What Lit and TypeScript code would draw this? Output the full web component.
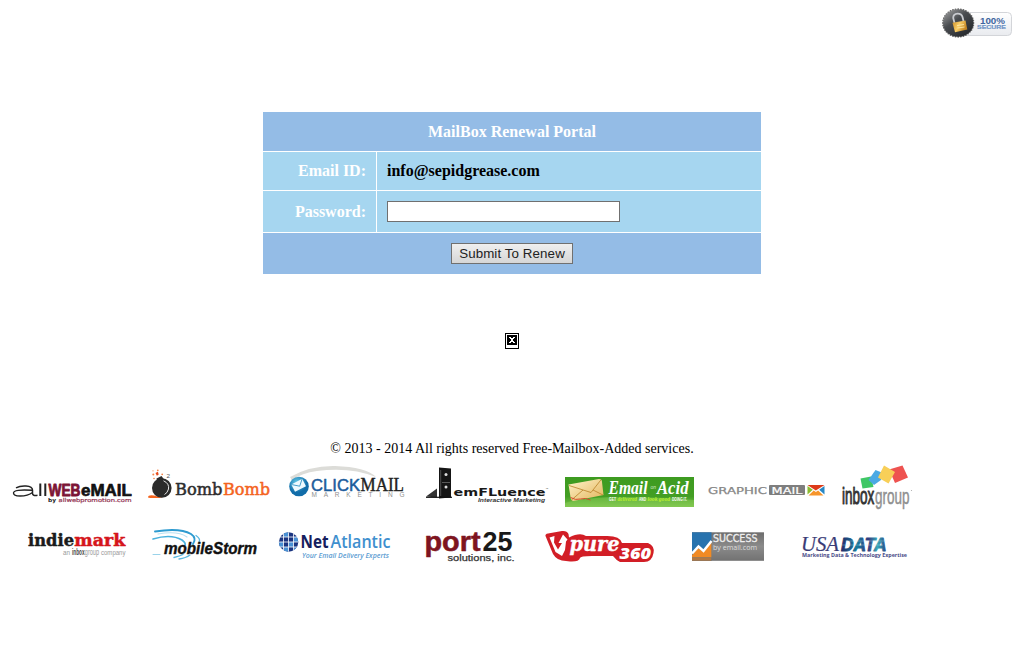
import { LitElement, html, svg, css } from "lit";
import { customElement, property } from "lit/decorators.js";

const SANS = "'Liberation Sans', sans-serif";
const SERIF = "'Liberation Serif', serif";
const SLAB = "'DejaVu Serif', serif";
const WIDE = "'DejaVu Sans', sans-serif";
const HUMAN = "'Open Sans', sans-serif";

interface Opts { f?: string; b?: number | string; i?: boolean; st?: string; sw?: number; k?: number; }

// One run of logo lettering: left edge, baseline, size, run width.
// k makes condensed letters: the type is set k times smaller and stretched upwards from its baseline.
const t = (x: number, y: number, s: number, w: number, fill: string, text: string, o: Opts = {}) => {
  const k = o.k ?? 1;
  return svg`
  <text x=${x} y="0" font-size=${s / k} textLength=${w} lengthAdjust="spacingAndGlyphs" fill=${fill}
    font-family=${o.f ?? SANS} font-weight=${o.b ?? 400} font-style=${o.i ? "italic" : "normal"}
    stroke=${o.st ?? "none"} stroke-width=${o.sw ?? 0} stroke-linejoin="round"
    transform="translate(0 ${y}) scale(1 ${k})">${text}</text>`;
};

const allweb = svg`
  <path d="M16 487.800 Q20 485.600 26 486 Q32.500 486.500 32.500 490 V493.500 Q32.500 496 37.500 495.200" fill="none" stroke="#222" stroke-width="1.500"/>
  <path d="M32.500 490.300 Q13.500 489 13.500 493 Q13.500 496 20 496 Q28 496 32.500 492.500" fill="none" stroke="#222" stroke-width="1.400"/>
  <path d="M40.300 483.500V496M45.300 483.500V496" stroke="#222" stroke-width="2"/>
  ${t(48.5, 496, 16.5, 32, "#7c1435", "WEB", { b: 700, st: "#7c1435", sw: 0.7, k: 1.22 })}
  ${t(81, 496, 16.5, 51, "#111", "eMAIL", { b: 700, st: "#111", sw: 0.6, k: 1.06 })}
  ${t(48, 502, 5.4, 8, "#222", "by", { f: WIDE, b: 700 })}
  ${t(58.5, 502, 5.4, 73, "#943653", "allwebpromotion.com", { f: WIDE, st: "#943653", sw: 0.2 })}`;

const bomb = svg`
  <path d="M148 497.500 Q148 494.500 154 495.500 L163 498 H150Z" fill="#f4641e"/>
  <circle cx="161.800" cy="488" r="9.800" fill="#2b2b2b"/>
  <path d="M156.500 478.500 L161.500 476 L164.500 480 L157 483Z" fill="#2b2b2b"/>
  <path d="M163.500 480.800 Q169.500 483.500 168.500 489 Q167.500 493 164.500 494.500" fill="none" stroke="#e4e4e4" stroke-width="1"/>
  <path d="M155.500 473l2.400-1.200.8 2.600-1.800 1.400z" fill="#e94c1c"/>
  <g fill="#f58345"><circle cx="153.300" cy="474.500" r="1"/><circle cx="157.800" cy="470.300" r=".9"/>
  <circle cx="162.200" cy="474.300" r=".9"/><circle cx="154" cy="478.500" r=".8"/><circle cx="153" cy="470.800" r=".6"/></g>
  ${t(166.5, 477.5, 5, 3.5, "#555", "2")}
  ${t(175, 494.8, 16.2, 47.5, "#2d2d2d", "Bomb", { f: SLAB, st: "#2d2d2d", sw: 0.5 })}
  ${t(223, 494.8, 16.2, 47, "#f4641e", "Bomb", { f: SLAB, st: "#f4641e", sw: 0.5 })}`;

const click = svg`
  <path d="M290 477 Q310 465.500 335 466 Q366 467 376 477 Q350 466.500 317 471 Q302 473 292 480Z" fill="#dcdcd8"/>
  <circle cx="299" cy="486.500" r="9.800" fill="url(#ball)"/>
  <path d="M291.300 484.500 L302.200 478.700 L306 486.300 L295 491.800Z" fill="#eefaff"/>
  <path d="M291.300 484.500 L299.700 486.200 L302.200 478.700" fill="none" stroke="#3193c4" stroke-width=".9"/>
  ${t(311, 490.8, 17.2, 49, "#1c5c9c", "CLICK", { st: "#1c5c9c", sw: 0.5 })}
  ${t(360.5, 490.8, 18, 43.5, "#222", "MAIL", { f: SERIF, st: "#222", sw: 0.4 })}
  <text x="311.500" y="497.300" font-size="6.500" textLength="93" fill="#8f8f8f" font-family=${SANS}>MARKETING</text>
  <defs><radialGradient id="ball" cx=".4" cy=".3"><stop stop-color="#66cdea"/><stop offset="1" stop-color="#126da9"/></radialGradient></defs>`;

const emf = svg`
  <path d="M439 467.500 L451 468.500 V497.500 L439 498.500Z" fill="#151515"/>
  <path d="M437 488.500 V497.500 L426 496.500Z" fill="#333"/>
  <path d="M426 497.300H452" stroke="#111" stroke-width="1.200"/>
  <path d="M440.700 470v26" stroke="#777" stroke-width=".6"/>
  <path d="M442 482.500H450" stroke="#777" stroke-width=".7"/>
  <circle cx="446" cy="474.500" r="1.500" fill="#ddd"/><circle cx="446" cy="487" r="1.500" fill="#ddd"/>
  ${t(453.5, 495.6, 10.8, 92, "#181818", "emFLuence", { f: WIDE, b: 700 })}
  ${t(545.5, 490, 3, 3, "#444", "™")}
  ${t(478, 501.8, 6, 67, "#333", "Interactive Marketing", { b: 700, i: true })}`;

const acid = svg`
  <defs><linearGradient id="grass" x2="0" y2="1"><stop stop-color="#3d9b20"/><stop offset=".65" stop-color="#439e24"/><stop offset="1" stop-color="#7cc34b"/></linearGradient>
  <linearGradient id="paper" x2="1" y2="1"><stop stop-color="#fff4cb"/><stop offset="1" stop-color="#e3b45b"/></linearGradient></defs>
  <rect x="565" y="477" width="129" height="30" fill="url(#grass)"/>
  <path d="M565 503 Q600 493 694 500 V507 H565Z" fill="#8fd05b" opacity=".45"/>
  <path d="M568.500 484.500 L599 479 Q602 479 602 482 L603.500 495 L573.500 501 Q571 501 570.500 497Z" fill="url(#paper)"/>
  <path d="M569 485.500 L591 492.500 L601 479.800 M571.500 500 L583 490 M603 495 L593 490" fill="none" stroke="#b98228" stroke-width=".8"/>
  <path d="M570.500 497.500q5 3 10 1.500t10 1" fill="none" stroke="#d4492a" stroke-width="1"/>
  ${t(608.5, 494, 19.5, 39, "#fff", "Email", { f: SERIF, b: 700, i: true, k: 1.2 })}
  ${t(650.5, 489, 5, 5.5, "#d5ecc9", "on", { i: true })}
  ${t(657, 494, 19.5, 31.5, "#fff", "Acid", { f: SERIF, b: 700, i: true, k: 1.2 })}
  ${t(609, 501, 5.5, 7, "#fff", "GET", { b: 700, k: 1.6 })}
  ${t(617.5, 501, 6.4, 19.5, "#bdf02c", "delivered", { f: SERIF, b: 700, i: true, k: 1.25 })}
  ${t(639, 501, 5.5, 7, "#fff", "AND", { b: 700, k: 1.6 })}
  ${t(647.5, 501, 6.4, 22.5, "#bdf02c", "look good", { f: SERIF, b: 700, i: true, k: 1.1 })}
  ${t(672, 501, 5.5, 15, "#fff", "DOING IT.", { b: 700, k: 1.7 })}`;

const graphic = svg`
  ${t(708, 493.6, 9.3, 59, "#868686", "GRAPHIC", { f: WIDE, st: "#868686", sw: 0.25 })}
  <rect x="769" y="485" width="36" height="10" rx="1" fill="#7e7e7e"/>
  ${t(771.5, 493.6, 9.3, 31, "#fff", "MAIL", { f: WIDE, st: "#fff", sw: 0.2 })}
  <path d="M807.500 485 L815.800 490.500 L824.500 485Z" fill="#dd3a18"/>
  <path d="M807.500 486v8.500l5.300-4.800z" fill="#8cbc2f"/>
  <path d="M824.500 486v8.500l-5.300-4.800z" fill="#2687c5"/>
  <path d="M808.500 495.500l5.200-5 2.200 1.500 2.200-1.500 5.400 5z" fill="#f6952b"/>`;

const inbox = svg`
  <path d="M889 469.500 L902.500 465.500 L908 477.500 L895 483Z" fill="#ee5350"/>
  <path d="M860.500 478.500 L871 476.500 L873.500 487 L862.500 488.500Z" fill="#3fc766"/>
  <path d="M875.500 470 L883 473 L881 480 L874 485 L868.500 480Z" fill="#4ba9e4"/>
  <path d="M884 465.500 L895 472 L888.500 483.500 L878 477.500Z" fill="#f8cf58"/>
  ${t(842, 503.7, 23, 32.3, "#333", "inbox", { st: "#333", sw: 0.6, k: 1.6 })}
  ${t(875, 503.7, 23, 34.5, "#8f8f8f", "group", { st: "#8f8f8f", sw: 0.3, k: 1.64 })}
  <circle cx="911.500" cy="490.500" r=".6" fill="#aaa"/>`;

const indie = svg`
  ${t(28, 545.5, 17.5, 46, "#1b1b1b", "indie", { f: SLAB, b: 700, st: "#1b1b1b", sw: 0.5 })}
  ${t(74.3, 545.5, 17.5, 51, "#d5151b", "mark", { f: SLAB, b: 700, st: "#d5151b", sw: 0.5 })}
  ${t(63, 555, 7, 7, "#999", "an")}
  ${t(72, 555, 8.5, 12.5, "#444", "inbox", { b: 700, k: 1.7 })}
  ${t(84.8, 555, 8.5, 14.2, "#999", "group", { k: 1.5 })}
  ${t(101, 555, 7, 24.5, "#999", "company", { k: 1.1 })}`;

const storm = svg`
  <g fill="none" stroke-linecap="round">
    <path d="M155 531.500 Q180 527.500 191 534 Q197 538 193 544" stroke="#2e9bd0" stroke-width="1.900"/>
    <path d="M153 539 Q171 533.500 182 540 Q186 543 185 545" stroke="#49b1dd" stroke-width="1.700"/>
    <path d="M158 534 Q178 530.500 187 537" stroke="#b8e1f2" stroke-width="1.200"/>
    <path d="M196 535.500 Q201 539 199 542 M183 554.500 Q180 556 174 557.500 M190 555 Q186 558 179 559" stroke="#5ab8df" stroke-width="1.300"/>
    <path d="M153 554.500 H160" stroke="#9ad3ea" stroke-width="1"/>
  </g>
  ${t(164, 553.7, 15.8, 93, "#111", "mobileStorm", { b: 700, i: true, st: "#111", sw: 0.4 })}`;

const atlantic = svg`
  <defs><clipPath id="globe"><circle cx="288.600" cy="542" r="9.700"/></clipPath></defs>
  <g clip-path="url(#globe)">
    <path d="M278 532h22v21h-22z" fill="#1b3580"/>
    <path d="M283.500 532h5v5h-5zM293.500 537h5v5h-5zM288.500 542h5v5h-5zM278.500 542h5v5h-5zM293.500 547h5v5h-5zM283.500 547h5v5h-5z" fill="#4a92d5"/>
    <path d="M283.500 532v21M288.500 532v21M293.500 532v21M278 537h22M278 542h22M278 547h22" stroke="#fff" stroke-width=".8"/>
  </g>
  ${t(300.5, 548, 17.6, 28, "#15205d", "Net", { f: HUMAN, b: 700 })}
  ${t(330.5, 548, 17.6, 60, "#3e8fce", "Atlantic", { f: HUMAN, b: 600 })}
  ${t(302, 558, 7.4, 87, "#5d9dd2", "Your Email Delivery Experts", { f: HUMAN, i: true, b: 600 })}`;

const port = svg`
  ${t(424.5, 551, 27, 56, "#7e1420", "port", { b: 700, st: "#7e1420", sw: 0.5 })}
  ${t(482.5, 551, 27, 30, "#191919", "25", { b: 700 })}
  ${t(447.5, 560.6, 8.8, 67, "#333", "solutions, inc.", { st: "#333", sw: 0.25 })}`;

const pure = svg`
  <path d="M545.500 536 Q545 534 548 533.500 L562 531 Q567 530.500 568.500 534 L569 537.500 Q580 532 586 536 L604 536 Q620 535 622 543 L648 543 Q655 546 653.500 553 Q652 562 644 562 L620 562 Q616 560 613 556 L592 556 Q580 556 580 558 Q579 562 570 561.500 L566 561 Q557 561 553 554Z" fill="#d21e26"/>
  <path d="M549.500 537.500 L554.500 536 L554 542.500 L558 549.500 L562 543 L558.500 543 L563 534.500 L567.500 539.500 L566 541.500 L565 550 L562 556 L555.500 552Z" fill="#fff"/>
  ${t(569.5, 551, 20, 50, "#fff", "pure", { f: SLAB, b: 700, i: true, st: "#fff", sw: 0.4 })}
  ${t(619.5, 558.8, 16, 31.5, "#fff", "360", { f: HUMAN, b: 800, i: true })}`;

const success = svg`
  <defs><linearGradient id="steel" x2="0" y2="1"><stop stop-color="#6d6d6d"/><stop offset=".5" stop-color="#8b8b8b"/><stop offset="1" stop-color="#727272"/></linearGradient></defs>
  <rect x="692" y="532.300" width="72" height="28.500" fill="url(#steel)"/>
  <rect x="692" y="532.300" width="19.500" height="28.500" fill="#2873ae"/>
  <path d="M692 555 L698 548 L703.500 552 L711.500 542 V557.500 H692Z" fill="#f18a24"/>
  <path d="M692 553.500 L698.500 546.500 L703.500 551 L711.500 541" fill="none" stroke="#fff" stroke-width="2.500"/>
  <rect x="692" y="557.500" width="19.500" height="3.300" fill="#b27843"/>
  ${t(713, 542.3, 9.6, 44.5, "#eee", "SUCCESS", { f: WIDE, st: "#eee", sw: 0.3 })}
  ${t(713, 550, 7.6, 44, "#ddd", "by email.com", { f: HUMAN })}`;

const usa = svg`
  <defs><linearGradient id="sea"><stop stop-color="#252a69"/><stop offset=".35" stop-color="#167c9c"/><stop offset=".6" stop-color="#34377d"/><stop offset=".8" stop-color="#36a9b9"/><stop offset="1" stop-color="#29407e"/></linearGradient></defs>
  ${t(801, 550.5, 20, 38, "#393b76", "USA", { f: SERIF, i: true, st: "#393b76", sw: 0.2 })}
  ${t(841, 550.5, 18, 45.5, "url(#sea)", "DATA", { b: 700, i: true, st: "url(#sea)", sw: 0.9 })}
  <path d="M842 545h41M846 541h40" stroke="#c6e8ee" stroke-width=".5" opacity=".6"/>
  ${t(802, 556.8, 5.8, 105, "#4b4c88", "Marketing Data & Technology Expertise", { f: HUMAN, b: 700 })}`;

const rows: { top: number; logos: [string, number, number, unknown][] }[] = [
  { top: 460, logos: [
    ["allWEBeMAIL", 0, 140, allweb], ["BombBomb", 140, 140, bomb], ["ClickMail Marketing", 280, 138, click],
    ["emfluence", 418, 140, emf], ["Email on Acid", 558, 142, acid], ["GraphicMail", 700, 132, graphic], ["inboxgroup", 832, 88, inbox]] },
  { top: 520, logos: [
    ["indiemark", 0, 140, indie], ["mobileStorm", 140, 130, storm], ["Net Atlantic", 270, 140, atlantic],
    ["port25 solutions", 410, 125, port], ["pure360", 535, 135, pure], ["Success by email.com", 670, 115, success], ["USADATA", 785, 135, usa]] },
];

@customElement("partner-strip")
export class PartnerStrip extends LitElement {
  static styles = css`
    :host { display: flex; flex-direction: column; gap: 5px; }
    .row { display: flex; height: 55px; }
    svg { display: block; flex: none; }
  `;
  render() {
    return rows.map(r => html`<div class="row">${r.logos.map(([name, x, w, art]) => html`
      <svg role="img" aria-label=${name} width=${w} height="55" viewBox="${x} ${r.top} ${w} 55">${art}</svg>`)}</div>`);
  }
}

@customElement("secure-badge")
export class SecureBadge extends LitElement {
  static styles = css`:host { display: block; } svg { display: block; }`;
  render() {
    const teeth = Array.from({ length: 36 }, (_, i) => {
      const a = (i * Math.PI) / 18;
      return svg`<circle cx=${958.2 + Math.cos(a) * 15.2} cy=${23 + Math.sin(a) * 13.8} r="1" fill="#666"/>`;
    });
    return html`<svg width="94" height="50" viewBox="930 0 94 50">
      <defs>
        <linearGradient id="pill" x2="0" y2="1"><stop stop-color="#fff"/><stop offset="1" stop-color="#e9ebef"/></linearGradient>
        <linearGradient id="disc" x2=".8" y2="1"><stop stop-color="#aaa"/><stop offset=".45" stop-color="#494c50"/><stop offset="1" stop-color="#24272b"/></linearGradient>
        <linearGradient id="gold" x2="1" y2=".4"><stop stop-color="#c98c27"/><stop offset=".5" stop-color="#f9cd66"/><stop offset="1" stop-color="#c48522"/></linearGradient>
      </defs>
      <rect x="960" y="12.500" width="51.500" height="23" rx="4" fill="url(#pill)" stroke="#d3d5d9"/>
      ${teeth}
      <ellipse cx="958.200" cy="23" rx="15.200" ry="13.800" fill="url(#disc)"/>
      <path d="M954.500 23 L953.200 18 Q953.200 14 957.500 13.700 Q961.500 13.500 962.500 17 L963.500 21" fill="none" stroke="#c9cbd0" stroke-width="1.800"/>
      <path d="M952.500 22.800 L965.500 20.500 L967.300 29.500 L955 32.200Z" fill="url(#gold)"/>
      <path d="M957 25.500l7-1M957.500 28l7-1" stroke="#fff0b5" stroke-width=".8"/>
      ${t(980, 24, 9.6, 25, "#3d659f", "100%", { b: 700 })}
      ${t(977, 29.4, 5.8, 29, "#6f94c6", "SECURE", { b: 700, st: "#6f94c6", sw: 0.2 })}
    </svg>`;
  }
}

@customElement("app-root")
export class AppRoot extends LitElement {
  @property() email = "info@sepidgrease.com";
  static styles = css`
    :host { display: flex; flex-direction: column; height: 652px; overflow: hidden; background: #fff;
      color: #000; font: 16px/18px "Liberation Serif", serif; }
    .top { display: flex; justify-content: flex-end; height: 112px; }
    .portal { align-self: center; display: grid; grid-template: 39px 38px 41px 41px / 113px 384px; gap: 1px; font-weight: 700; }
    .bar { grid-column: 1 / -1; display: flex; align-items: center; justify-content: center; background: #94bce6; color: #fff; }
    .label, .value { display: flex; align-items: center; padding: 0 10px; background: #a6d6f0; }
    .label { justify-content: flex-end; color: #fff; }
    input { box-sizing: border-box; width: 233px; height: 21px; border: 1px solid #707070; border-radius: 0; background: #fff; padding: 1px; margin: 0; outline: 0; }
    button { box-sizing: border-box; width: 122px; height: 21px; padding: 0; border: 1px solid #707070; border-radius: 0;
      background: linear-gradient(#efefef, #d6d6d6); color: #222; font: 13.333px/17px "Liberation Sans", sans-serif; letter-spacing: 0.1px; white-space: nowrap; }
    .missing { display: block; align-self: center; margin-top: 59px; }
    .legal { margin-top: 91px; height: 20px; text-align: center; font-size: 14px; line-height: 17px; white-space: nowrap; }
  `;
  render() {
    return html`
      <div class="top"><secure-badge></secure-badge></div>
      <form class="portal" @submit=${(e: Event) => e.preventDefault()}>
        <div class="bar"><span>MailBox Renewal Portal</span></div>
        <div class="label">Email ID:</div><div class="value">${this.email}</div>
        <div class="label">Password:</div><div class="value"><input type="password" aria-label="Password"></div>
        <div class="bar"><button type="submit">Submit To Renew</button></div>
      </form>
      <svg class="missing" width="14" height="16" viewBox="0 0 14 16" shape-rendering="crispEdges">
        <rect x=".5" y=".5" width="13" height="15" fill="#fff" stroke="#000"/>
        <rect x="2" y="2" width="10" height="10" fill="#000"/>
        <path d="M4 4h2v1h2v-1h2v1h-1v1h-1v2h1v1h1v1h-2v-1h-2v1h-2v-1h1v-1h1v-2h-1v-1h-1z" fill="#fff"/>
      </svg>
      <div class="legal">© 2013 - 2014 All rights reserved Free-Mailbox-Added services.</div>
      <partner-strip></partner-strip>`;
  }
}
